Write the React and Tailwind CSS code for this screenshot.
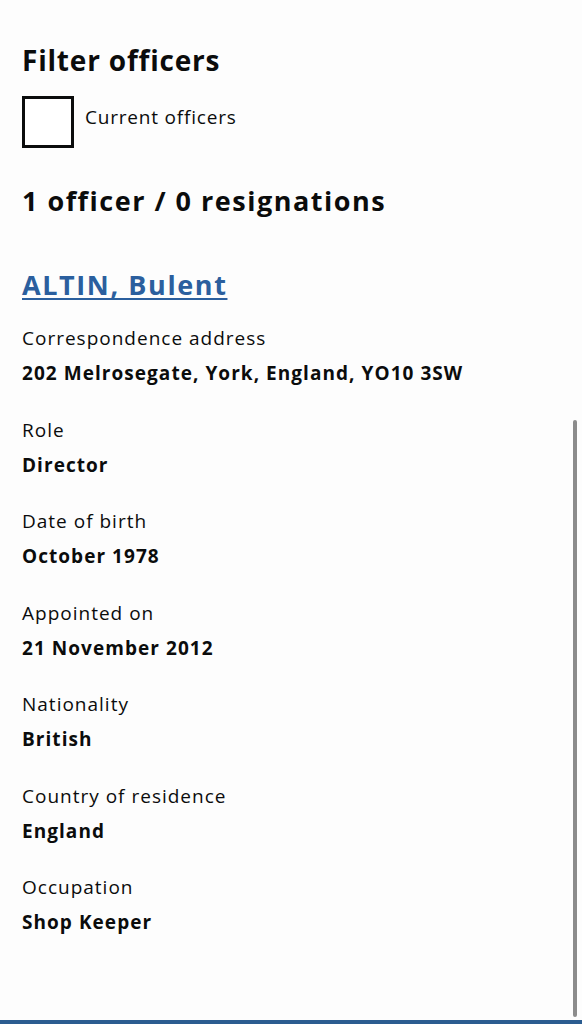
import React from 'react'

const details = [
  { label: 'Correspondence address', value: '202 Melrosegate, York, England, YO10 3SW' },
  { label: 'Role', value: 'Director' },
  { label: 'Date of birth', value: 'October 1978' },
  { label: 'Appointed on', value: '21 November 2012' },
  { label: 'Nationality', value: 'British' },
  { label: 'Country of residence', value: 'England' },
  { label: 'Occupation', value: 'Shop Keeper' },
]

const App = () => {
  return (
    <div className="relative h-[1024px] w-[582px] overflow-hidden bg-[#fdfdfd] text-[#0b0c0c] flex flex-col font-['Open_Sans',sans-serif]">
      <div className="flex-1 px-[22px] pt-[40px]">
        {/* Filter */}
        <h2 className="text-[28px] leading-[40px] font-bold tracking-[0.8px]">Filter officers</h2>
        <label className="mt-[16px] flex items-center gap-[11px]">
          <span className="block w-[52px] h-[52px] border-[3px] border-[#0b0c0c] bg-white" />
          <span className="text-[19px] leading-[24px] pb-[10px] tracking-[0.8px]">Current officers</span>
        </label>

        <h2 className="mt-[33px] text-[27px] leading-[40px] font-bold tracking-[1.5px]">1 officer / 0 resignations</h2>

        {/* Officer */}
        <a href="#" className="mt-[44px] inline-block text-[27px] leading-[40px] font-bold tracking-[1.6px] text-[#2b5f9e] underline underline-offset-[3px] decoration-[2px]">
          ALTIN, Bulent
        </a>

        <dl className="mt-[16px]">
          {details.map((d) => (
            <div key={d.label} className="mb-[21.5px]">
              <dt className="text-[19px] leading-[35px] tracking-[1px]">{d.label}</dt>
              <dd className="text-[19px] leading-[35px] font-bold tracking-[1.05px]">{d.value}</dd>
            </div>
          ))}
        </dl>
      </div>

      <div className="h-[4px] bg-[#2b5c90]" />

      {/* scroll indicator */}
      <div className="absolute right-[5px] top-[420px] w-[4px] h-[597px] rounded-full bg-[#8c8c8c]" />
    </div>
  )
}

export default App
